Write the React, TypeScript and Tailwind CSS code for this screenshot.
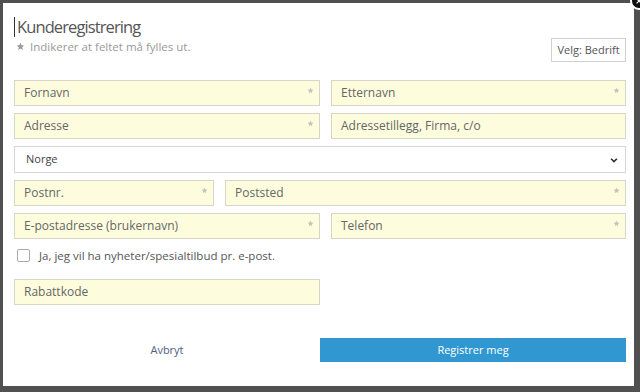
import React from 'react';

const font = { fontFamily: '"Open Sans", "Noto Sans", sans-serif' };

function Star({ className = '' }: { className?: string }) {
  return (
    <svg viewBox="0 0 24 24" className={className} fill="currentColor">
      <path d="M12 2l2.9 6.9 7.1.6-5.4 4.7 1.6 7-6.2-3.8-6.2 3.8 1.6-7L2 9.5l7.1-.6z" />
    </svg>
  );
}

function Field({ label, required = false, className = '' }: { label: string; required?: boolean; className?: string }) {
  return (
    <div className={`relative h-[26px] border border-[#d6d6c8] bg-[#fdfdde] pl-[9px] flex items-center text-[12px] text-[#666] ${className}`}>
      {label}
      {required && <Star className="absolute right-[5px] top-[6px] h-[7px] w-[7px] text-[#c4c4bc]" />}
    </div>
  );
}

export default function App() {
  return (
    <div className="relative h-[392px] w-[640px] overflow-hidden bg-[#505050] p-[3px] pr-[6px]" style={font}>
      <div className="flex h-[383px] flex-col bg-white pl-[11px] pr-[8px]">
        {/* header */}
        <div className="flex items-start justify-between">
          <div className="pt-[13px]">
            <div className="flex items-center text-[16.5px] leading-[22px] tracking-[-0.9px] text-[#555]">
              <span className="mr-[2px] inline-block h-[20px] w-[1px] bg-[#333]" />
              Kunderegistrering
            </div>
            <div className="flex items-center text-[11.5px] text-[#999]">
              <Star className="ml-[2px] mr-[5px] h-[9px] w-[9px] text-[#999]" />
              Indikerer at feltet må fylles ut.
            </div>
          </div>
          <button className="mt-[35px] h-[24px] w-[75px] border border-[#d0d0d0] bg-white text-[11px] text-[#555]">
            Velg: Bedrift
          </button>
        </div>

        {/* form */}
        <div className="mt-[18px] flex flex-col gap-[7px]">
          <div className="flex gap-[11px]">
            <Field label="Fornavn" required className="w-[306px]" />
            <Field label="Etternavn" required className="flex-1" />
          </div>
          <div className="flex gap-[11px]">
            <Field label="Adresse" required className="w-[306px]" />
            <Field label="Adressetillegg, Firma, c/o" className="flex-1" />
          </div>
          <div className="flex h-[27px] items-center justify-between border border-[#d6d6d6] bg-white pl-[11px] pr-[6px] text-[11px] text-[#444]">
            Norge
            <svg viewBox="0 0 12 12" className="h-[10px] w-[10px] text-[#333]" fill="none" stroke="currentColor" strokeWidth="2">
              <path d="M2.5 4.5l3.5 3.5 3.5-3.5" />
            </svg>
          </div>
          <div className="flex gap-[11px]">
            <Field label="Postnr." required className="w-[200px]" />
            <Field label="Poststed" required className="flex-1" />
          </div>
          <div className="flex gap-[11px]">
            <Field label="E-postadresse (brukernavn)" required className="w-[306px]" />
            <Field label="Telefon" required className="flex-1" />
          </div>
          <label className="mt-[1px] flex items-center text-[11.5px] text-[#555]">
            <span className="ml-[3px] mr-[9px] inline-block h-[13px] w-[13px] rounded-[2px] border border-[#aaa] bg-white" />
            Ja, jeg vil ha nyheter/spesialtilbud pr. e-post.
          </label>
          <Field label="Rabattkode" className="mt-[8px] w-[306px]" />
        </div>

        {/* buttons */}
        <div className="mt-[33px] flex">
          <button className="h-[24px] w-[306px] text-[11px] text-[#50607a]">Avbryt</button>
          <button className="h-[24px] flex-1 bg-[#3097d1] text-[11px] text-white">Registrer meg</button>
        </div>
      </div>

      {/* close button */}
      <div className="absolute right-[-8px] top-[-8px] flex h-[18px] w-[18px] items-center justify-center rounded-full border-2 border-white bg-[#111]">
        <svg viewBox="0 0 10 10" className="h-[6px] w-[6px]" stroke="white" strokeWidth="2">
          <path d="M1 1l8 8M9 1l-8 8" />
        </svg>
      </div>
    </div>
  );
}
